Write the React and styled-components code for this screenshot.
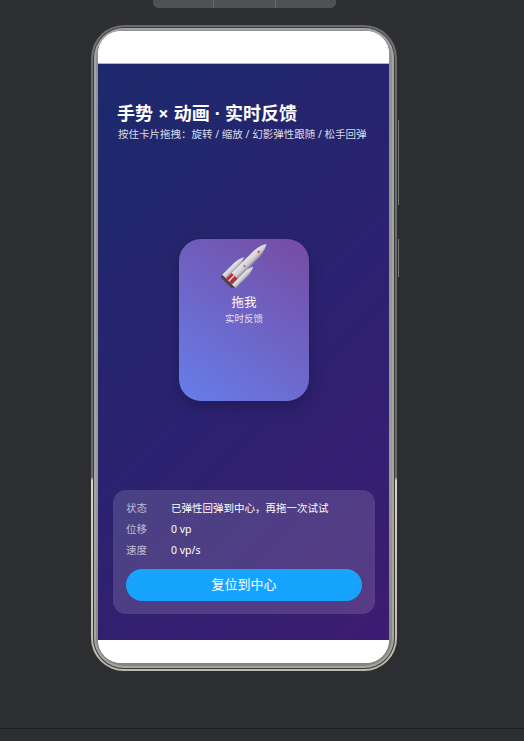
import styled, { createGlobalStyle } from "styled-components";

const GlobalStyle = createGlobalStyle`
  html, body {
    margin: 0;
    padding: 0;
    background: #2d2e32;
  }
  * {
    box-sizing: border-box;
  }
`;

const statusRows = [
  { label: "状态", value: "已弹性回弹到中心，再拖一次试试" },
  { label: "位移", value: "0 vp" },
  { label: "速度", value: "0 vp/s" },
];

const RocketIcon = () => (
  <svg width="46" height="46" viewBox="0 0 46 46">
    <defs>
      <linearGradient id="hull" x1="0" y1="0" x2="1" y2="0">
        <stop offset="0" stopColor="#e6e6ea" />
        <stop offset="0.6" stopColor="#cfcfd5" />
        <stop offset="1" stopColor="#9494a0" />
      </linearGradient>
    </defs>
    <g transform="translate(23.5 24) rotate(45)">
      <path d="M-6.5 -6 C-8.2 -3 -9.5 1 -9.5 5 L-9.5 22 L-4 22 L-4 1 Z" fill="url(#hull)" />
      <path d="M6.5 -6 C8.2 -3 9.5 1 9.5 5 L9.5 22 L4 22 L4 1 Z" fill="url(#hull)" />
      <path d="M0 -31 C2.8 -27 4.2 -21 4.2 -15 L4.2 22 L-4.2 22 L-4.2 -15 C-4.2 -21 -2.8 -27 0 -31 Z" fill="url(#hull)" />
      <rect x="-4.2" y="14" width="8.4" height="8" fill="#b8303a" />
      <rect x="-1.2" y="14" width="1.4" height="8" fill="#dcdce0" />
      <rect x="-9" y="22" width="18" height="3" fill="#4a464e" />
      <circle cx="0" cy="-20" r="1.3" fill="#e0564f" />
      <circle cx="0" cy="0" r="1.1" fill="#e0564f" />
    </g>
  </svg>
);

const App = () => {
  return (
    <Page>
      <GlobalStyle />
      <TopTabs>
        <TopTab />
        <TopTab />
        <TopTab />
      </TopTabs>
      <Phone>
        <Bezel>
          <Screen>
            <StatusBar />
            <Content>
              <Header>
                <Title>手势 × 动画 · 实时反馈</Title>
                <Subtitle>按住卡片拖拽：旋转 / 缩放 / 幻影弹性跟随 / 松手回弹</Subtitle>
              </Header>
              <Stage>
                <DragCard>
                  <RocketIcon />
                  <CardTitle>拖我</CardTitle>
                  <CardHint>实时反馈</CardHint>
                </DragCard>
              </Stage>
              <Panel>
                {statusRows.map((row) => (
                  <Row key={row.label}>
                    <RowLabel>{row.label}</RowLabel>
                    <RowValue>{row.value}</RowValue>
                  </Row>
                ))}
                <ResetButton>复位到中心</ResetButton>
              </Panel>
            </Content>
            <NavBar />
          </Screen>
        </Bezel>
        <SideKey $top={95} $height={85} />
        <SideKey $top={214} $height={38} />
      </Phone>
      <BottomBar />
    </Page>
  );
};

export default App;

const Page = styled.div`
  width: 524px;
  height: 741px;
  overflow: hidden;
  display: flex;
  flex-direction: column;
  background: #2d2e32;
  font-family: "Noto Sans", "Noto Sans CJK SC", sans-serif;
`;

const TopTabs = styled.div`
  display: flex;
  width: 183px;
  height: 8px;
  margin-left: 153px;
  gap: 1px;
  border-radius: 0 0 6px 6px;
  overflow: hidden;
  background: #66686d;
`;

const TopTab = styled.div`
  flex: 1;
  background: #505157;
`;

const Phone = styled.div`
  position: relative;
  width: 306px;
  height: 646px;
  margin: 17px 0 0 91px;
  padding: 2px;
  border-radius: 33px;
  background: linear-gradient(180deg, #6a6b6c 0%, #6a6b6c 70%, #d8d4c6 70.5%, #bdb9a9 100%);
`;

const Bezel = styled.div`
  height: 100%;
  padding: 4px 6px 6px 5px;
  border-radius: 31px;
  background: linear-gradient(180deg, #8f9091 0%, #9a9a98 70%, #85837b 100%);
  box-shadow: inset 0 0 0 1px #3c3d3e, inset 0 0 0 3px #a4a4a2;
`;

const Screen = styled.div`
  height: 100%;
  display: flex;
  flex-direction: column;
  overflow: hidden;
  border-radius: 23px;
  background: #fff;
`;

const StatusBar = styled.div`
  height: 33px;
  flex: none;
  background: #fff;
  border-bottom: 1px solid #b4b4bc;
`;

const Content = styled.div`
  height: 576px;
  flex: none;
  display: flex;
  flex-direction: column;
  padding: 37px 14px 26px 15px;
  background: linear-gradient(135deg, #1c2a6c 0%, #2b2270 50%, #3d1c72 100%);
`;

const Header = styled.div`
  padding-left: 5px;
`;

const Title = styled.div`
  margin-left: -1px;
  font-size: 18px;
  line-height: 24px;
  font-weight: 700;
  word-spacing: 0.5px;
  white-space: nowrap;
  color: #fff;
`;

const Subtitle = styled.div`
  margin-top: 2px;
  font-size: 10.5px;
  line-height: 15px;
  white-space: nowrap;
  color: rgba(255, 255, 255, 0.85);
`;

const Stage = styled.div`
  flex: 1;
  display: flex;
  justify-content: center;
  padding-top: 97px;
`;

const DragCard = styled.div`
  width: 130px;
  height: 162px;
  display: flex;
  flex-direction: column;
  align-items: center;
  padding-top: 3px;
  border-radius: 22px;
  background: linear-gradient(35deg, #667eea 0%, #764ba2 100%);
  box-shadow: 0 6px 16px rgba(0, 0, 0, 0.22);
`;

const CardTitle = styled.div`
  margin-top: 6px;
  font-size: 12.5px;
  line-height: 18px;
  color: #fff;
`;

const CardHint = styled.div`
  font-size: 9.5px;
  line-height: 14px;
  color: rgba(255, 255, 255, 0.8);
`;

const Panel = styled.div`
  display: flex;
  flex-direction: column;
  height: 124px;
  padding: 7px 13px 13px;
  border-radius: 13px;
  background: rgba(255, 255, 255, 0.14);
`;

const Row = styled.div`
  display: flex;
  align-items: center;
  height: 21px;
  font-size: 10.5px;
`;

const RowLabel = styled.div`
  width: 45px;
  color: rgba(255, 255, 255, 0.65);
`;

const RowValue = styled.div`
  color: #fff;
`;

const ResetButton = styled.button`
  height: 32px;
  margin-top: 9px;
  padding: 0 0 3px;
  border: none;
  border-radius: 16px;
  background: #17a4ff;
  color: #fff;
  font-family: inherit;
  font-size: 13px;
`;

const NavBar = styled.div`
  flex: 1;
  background: #fff;
`;

const SideKey = styled.div`
  position: absolute;
  top: ${(props) => props.$top}px;
  right: -2px;
  width: 1px;
  height: ${(props) => props.$height}px;
  background: #77787a;
`;

const BottomBar = styled.div`
  height: 13px;
  margin-top: auto;
  border-top: 1px solid #1f2023;
`;
